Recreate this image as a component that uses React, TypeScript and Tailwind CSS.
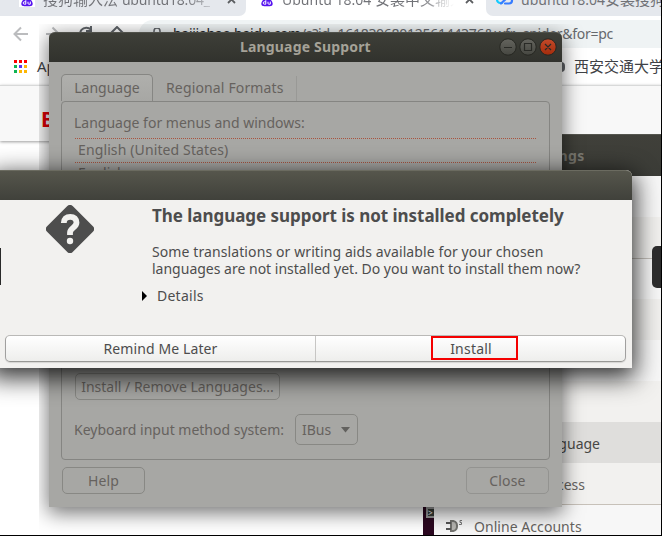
import type { ReactNode } from "react";

const DottedRule = () => (
  <div className="ml-px h-px w-[462px] shrink-0 bg-[repeating-linear-gradient(90deg,#a9543f_0px,#a9543f_1px,#a7a7a4_1px,#a7a7a4_2px)]" />
);

const PawIcon = () => (
  <svg width="16" height="16" viewBox="0 0 16 16" className="shrink-0">
    <rect width="16" height="16" fill="#fff" />
    <g fill="#5512ef">
      <ellipse cx="3.4" cy="6.7" rx="1.8" ry="2.3" />
      <ellipse cx="6" cy="3.4" rx="1.7" ry="2.4" />
      <ellipse cx="10" cy="3.4" rx="1.7" ry="2.4" />
      <ellipse cx="12.6" cy="6.7" rx="1.8" ry="2.3" />
      <path d="M8 6.4c2.6 0 5.7 4.2 5.7 6.4 0 1.8-1.4 2.4-3 2.4H5.3c-1.6 0-3-.6-3-2.4C2.3 10.600 5.400 6.400 8 6.400z" />
    </g>
    <path d="M6.800 9.200v4H5.400a1.200 1.200 0 010-2.400h1.400M9 10.700v1.700q0 .8.800.8h1.500v-2.600" fill="none" stroke="#fff" strokeWidth="1" />
  </svg>
);

const AppsIcon = () => (
  <svg width="14" height="14" viewBox="0 0 14 14" className="shrink-0">
    <path d="M0 0h3v3H0zM5 0h3v3H5zM10 0h3v3h-3z" fill="#f00" />
    <path d="M0 5h3v3H0zM0 10h3v3H0z" fill="#0fb453" />
    <path d="M5 5h3v3H5z" fill="#5b35ef" />
    <path d="M10 5h3v3h-3zM5 10h3v3H5zM10 10h3v3h-3z" fill="#fdb604" />
  </svg>
);

const TabClose = ({ place }: { place: string }) => (
  <svg width="9" height="9" viewBox="0 0 9 9" className={`shrink-0 -mt-[5px] ${place}`}>
    <path d="M1 1l7 7M8 1L1 8" stroke="#5c5e61" strokeWidth="1.800" />
  </svg>
);

function Browser() {
  return (
    <div className="flex h-[536px] w-[662px] flex-col overflow-hidden bg-white">
      <div className="flex h-4 shrink-0 bg-white text-[15px] leading-[22px] text-[#717277]">
        <div className="flex w-[246px] overflow-hidden rounded-br-[7px] bg-[#e5e8ed] pl-[19px]">
          <div className="-mt-[9px]"><PawIcon /></div>
          <div className="ml-2 -mt-3 w-[177px] overflow-hidden whitespace-nowrap bg-gradient-to-r from-[#717277] from-80% to-[#e5e8ed] bg-clip-text text-transparent">搜狗输入法 <span className="text-[14px] tracking-[-0.200px]">ubuntu18.04_</span></div>
          <TabClose place="ml-[7px]" />
        </div>
        <div className="flex w-[240px] overflow-hidden pl-[13px]">
          <div className="-mt-[9px]"><PawIcon /></div>
          <div className="ml-[7px] -mt-3 w-[172px] overflow-hidden whitespace-nowrap bg-gradient-to-r from-[#717277] from-80% to-white bg-clip-text text-transparent"><span className="text-[14px]">Ubuntu 18.04 </span>安装中文输入</div>
          <TabClose place="ml-[11px]" />
        </div>
        <div className="flex w-[176px] overflow-hidden rounded-bl-[7px] bg-[#e5e8ed] pl-[10px]">
          <svg width="18" height="16" viewBox="0 0 18 16" className="-mt-[11px] shrink-0" fill="none" strokeWidth="2.200" strokeLinecap="round"><path d="M6 14H4.500a3.500 3.500 0 010-7" stroke="#12caff" /><path d="M5 14.500L13 7M9 14.500h4a3 3 0 003-3V8" stroke="#367cff" /></svg>
          <div className="ml-[7px] -mt-3 whitespace-nowrap"><span className="text-[14px]">ubuntu18.04</span>安装搜狗</div>
        </div>
      </div>
      <div className="flex h-8 shrink-0 pt-1">
        <div className="flex w-[139px] pl-[13px] pt-[6px]">
          <svg width="116" height="16" viewBox="0 0 116 16" fill="none" strokeWidth="2">
            <path d="M15 8H2M8 1.500L1.500 8 8 14.500" stroke="#bbbcbe" />
            <path d="M33 8h13M39.500 1.500L46 8l-6.500 6.500" stroke="#bbbcbe" />
            <path d="M78 3.500a6.500 6.500 0 101 8M78 0v5h-5" stroke="#5f6368" />
            <path d="M97 8l7-7 7 7M99 7v8h10V7" stroke="#5f6368" />
          </svg>
        </div>
        <div className="flex grow rounded-l-full bg-[#eff3f4] pl-[14px] text-[14px] leading-[28px] text-[#66696d]">
          <svg width="8" height="14" viewBox="0 0 8 14" className="mt-2"><path d="M1 5V3a3 3 0 016 0v2M0 5h8v8H0z" fill="none" stroke="#5f6368" strokeWidth="1.500" /></svg>
          <div className="ml-[12px] w-[441px] whitespace-nowrap tracking-[-0.280px]"><span className="text-[#25272a]">baijiahao.baidu.com</span>/s?id=1618306801256144376&amp;wfr=spider&amp;for=pc</div>
        </div>
      </div>
      <div className="flex h-[37px] shrink-0 items-center justify-between text-[#404246]">
        <div className="flex items-center pl-[14px] text-[15px]"><AppsIcon /><span className="ml-[9px]">Apps</span></div>
        <div className="flex items-center text-[15px]"><span className="mr-[9px] h-[10px] w-4 rounded-sm bg-[#606266]" /><span className="w-[88px] whitespace-nowrap">西安交通大学</span></div>
      </div>
      <div className="h-[56px] shrink-0 border-t border-[#d8d9d9] bg-[#f8f8f8] pl-[41px] pt-[20px] text-[21px] font-bold leading-[26px] text-[#df0006] shadow-[0_1px_3px_#9b9b9b]">Bai</div>
    </div>
  );
}

const SettingsRow = ({ tone, children }: { tone: string; children?: ReactNode }) => (
  <div className={`flex h-[41px] shrink-0 items-center text-[14px] ${tone}`}>{children}</div>
);

function SettingsWindow() {
  return (
    <div className="absolute left-[434px] top-[134px] flex h-[402px] w-[228px] flex-col overflow-hidden bg-[#f7f7f7] text-[#66635f]">
      <div className="flex h-[42px] shrink-0 items-center border-t border-[#55564f] bg-gradient-to-b from-[#40403a] to-[#3b3c37] pb-px pl-[90px] text-[14px] font-bold tracking-[0.4px] text-[#7d7c74]">Settings</div>
      <SettingsRow tone="bg-[#f7f7f7]" />
      <SettingsRow tone="bg-[#f1f0ee]" />
      <SettingsRow tone="border-t border-[#c4c0ba] bg-[#f7f7f7]" />
      <SettingsRow tone="bg-[#f1f0ee]" />
      <SettingsRow tone="bg-[#f7f7f7]" />
      <SettingsRow tone="bg-[#f2f1ef]" />
      <SettingsRow tone="bg-[#dfdedc] pl-[40px] pt-[2px] text-[#484846]"><span className="flex w-[126px] justify-end whitespace-nowrap">Region &amp; Language</span></SettingsRow>
      <SettingsRow tone="bg-[#f2f1ef] pl-[40px] pt-[2px]"><span className="flex w-[111px] justify-end whitespace-nowrap">Universal Access</span></SettingsRow>
      <SettingsRow tone="border-t border-[#c7c1b9] bg-[#f7f7f7] pl-[11px] pt-[2px]">
        <svg width="18" height="18" viewBox="0 0 18 18" className="shrink-0"><path d="M5 3h2c4 0 6 2.500 6 6s-2 6-6 6H5z" fill="#73736f" /><path d="M7 5h1c2 0 3 1.500 3 4s-1 4-3 4H7z" fill="#b8b7b3" /><path d="M1 6h5M1 12h5" stroke="#555" strokeWidth="2" /><path d="M17 3.500h-2v2h1.500v2H14" fill="none" stroke="#777" /></svg>
        <span className="ml-[11px] whitespace-nowrap tracking-[0.05px]">Online Accounts</span>
      </SettingsRow>
    </div>
  );
}

function WindowControls() {
  return (
    <svg width="58" height="18" viewBox="0 0 58 18" className="shrink-0">
      <defs>
        <linearGradient id="gray" x2="0" y2="1"><stop stopColor="#64645e" /><stop offset="1" stopColor="#464741" /></linearGradient>
        <linearGradient id="orange" x2="0" y2="1"><stop stopColor="#c34a2a" /><stop offset="1" stopColor="#a42c0c" /></linearGradient>
      </defs>
      <g stroke="#262722" strokeWidth="1"><circle cx="9" cy="9" r="8.200" fill="url(#gray)" /><circle cx="29" cy="9" r="8.200" fill="url(#gray)" /><circle cx="49" cy="9" r="8.200" fill="url(#orange)" /></g>
      <path d="M5 9.500h8M25.500 5.500h7v7h-7zM46 6l6 6M52 6l-6 6" fill="none" stroke="#292a26" strokeWidth="1.200" />
    </svg>
  );
}

function LanguageWindow() {
  return (
    <div className="absolute left-[39px] top-[24px] h-[511px] w-[570px] overflow-hidden pl-[10px] pt-[8px]">
      <div className="flex h-[475px] w-[513px] flex-col rounded-t-[6px] bg-[#a7a7a4] text-[14px] leading-[18px] text-[#66625e] shadow-[0_5px_20px_1px_rgba(0,0,0,0.55)]">
        <div className="flex h-[30px] shrink-0 items-center rounded-t-[6px] border-t border-[#50514a] bg-gradient-to-b from-[#3e3f38] to-[#31322d] pb-[2px]">
          <div className="w-[450px] shrink-0 pl-[191px]"><span className="whitespace-nowrap font-bold tracking-[0.170px] text-[#a5a298]">Language Support</span></div>
          <WindowControls />
        </div>
        <div className="flex h-[39px] shrink-0 items-end pl-[12px]">
          <div className="flex h-[27px] w-[92px] items-center justify-center rounded-t-[5px] border border-b-0 border-[#868683] bg-gradient-to-b from-[#afafac] to-[#a7a7a4] pb-px">Language</div>
          <div className="flex h-[25px] items-center border-r border-[#999996] pb-px pl-[13px] pr-[12px]"><span className="w-[118px] whitespace-nowrap tracking-[0.150px]">Regional Formats</span></div>
        </div>
        <div className="ml-[12px] flex h-[359px] w-[489px] shrink-0 flex-col rounded-[4px] border border-[#858582] pl-[12px]">
          <div className="flex h-[36px] shrink-0 items-center pt-[5px]"><span className="whitespace-nowrap">Language for menus and windows:</span></div>
          <DottedRule />
          <div className="flex h-[23px] shrink-0 items-center pb-[2px] pl-[4px] tracking-[0.120px]">English (United States)</div>
          <DottedRule />
          <div className="h-[24px] shrink-0 pl-[4px] pt-[1px]">English</div>
          <div className="ml-px mt-[186px] flex h-[27px] w-[205px] shrink-0 items-center justify-center whitespace-nowrap rounded-[5px] border border-[#888884]">Install / Remove Languages...</div>
          <div className="mt-[14px] flex items-center gap-[8px]">
            <span className="w-[213px] whitespace-nowrap pt-px">Keyboard input method system:</span>
            <div className="flex h-[31px] w-[63px] items-center rounded-[5px] border border-[#888884] pl-[6px] pt-px">IBus<svg width="9" height="6" viewBox="0 0 9 6" className="ml-[10px]"><path d="M0 0h9L4.500 5.500z" fill="#62615e" /></svg></div>
          </div>
        </div>
        <div className="flex justify-between px-[13px] pt-[7px]">
          <div className="flex h-[27px] w-[83px] items-center justify-center rounded-[5px] border border-[#888884] tracking-[0.150px]">Help</div>
          <div className="flex h-[27px] w-[83px] items-center justify-center rounded-[5px] border border-[#939390] tracking-[0.150px]">Close</div>
        </div>
      </div>
    </div>
  );
}

function QuestionDialog() {
  return (
    <div className="absolute -left-2 top-[170px] flex h-[198px] w-[640px] flex-col rounded-t-[6px] bg-[#f2f1ef] text-[14px] text-[#4d4d4d] shadow-[0_7px_24px_3px_rgba(0,0,0,0.8)]">
      <div className="h-[30px] shrink-0 rounded-tr-[6px] border-t border-[#6b6b60] bg-gradient-to-b from-[#56564c] to-[#40413b]" />
      <div className="flex h-[135px] shrink-0 pl-[54px] pt-[5px]">
        <svg width="48" height="48" viewBox="0 0 48 48" className="shrink-0">
          <rect x="5.900" y="5.900" width="36.200" height="36.200" rx="3.800" transform="rotate(45 24 24)" fill="#4d4d4d" />
          <path d="M17.800 18c0-4 2.500-6.200 6.500-6.200 3.900 0 6.200 2.300 6.200 5.800 0 5.200-6.500 5.200-6.500 10.200v2.300" fill="none" stroke="#f2f1ef" strokeWidth="5.800" />
          <circle cx="24" cy="36" r="3.200" fill="#f2f1ef" />
        </svg>
        <div className="ml-[48px] flex flex-col">
          <div className="ml-[10px] whitespace-nowrap text-[17px] font-bold leading-[22px] tracking-[-0.040px]">The language support is not installed completely</div>
          <div className="ml-[10px] mt-[16px] whitespace-nowrap leading-[17px]"><span className="tracking-[0.100px]">Some translations or writing aids available for your chosen</span><br />languages are not installed yet. Do you want to install them now?</div>
          <div className="mt-[10px] flex items-center leading-[18px]"><svg width="5" height="10" viewBox="0 0 5 10"><path d="M0 0l5 5-5 5z" fill="#000" /></svg><span className="ml-[10px] tracking-[0.250px]">Details</span></div>
        </div>
      </div>
      <div className="ml-[13px] flex h-[27px] w-[621px] shrink-0 rounded-[5px] border border-x-[#a1a09f] border-b-[#989895] border-t-[#bab9b7] bg-gradient-to-b from-white to-[#eeeeec] shadow-[0_1px_1px_#d5d4d2]">
        <div className="flex w-[310px] items-center justify-center border-r border-[#c7c6c4] tracking-[0.100px]">Remind Me Later</div>
        <div className="flex grow items-center justify-center"><div className="mb-[2px] ml-[7px] flex h-[24px] w-[87px] items-center justify-center border-2 border-[#f40000] pr-[6px] pt-[2px] tracking-[0.200px]">Install</div></div>
      </div>
    </div>
  );
}

export default function App() {
  return (
    <main className="relative h-[536px] w-[662px] overflow-hidden font-['Noto_Sans','Noto_Sans_CJK_SC',sans-serif]">
      <Browser />
      <div className="absolute left-[423px] top-[507px] h-[29px] w-[11px] overflow-hidden bg-[#2b0820] pl-[3px]"><div className="h-[11px] w-3 border-2 border-[#999] bg-[#353b36] text-[8px] leading-[8px] text-white">&gt;</div></div>
      <SettingsWindow />
      <LanguageWindow />
      <QuestionDialog />
      <div className="absolute left-[652px] top-[246px] h-[42px] w-[10px] rounded-l-[5px] bg-[#2b2b2b]" />
      <div className="absolute left-0 top-[248px] h-[37px] w-px bg-[#292929]" />
      <div className="pointer-events-none absolute inset-0 border-b border-r border-black" />
    </main>
  );
}
